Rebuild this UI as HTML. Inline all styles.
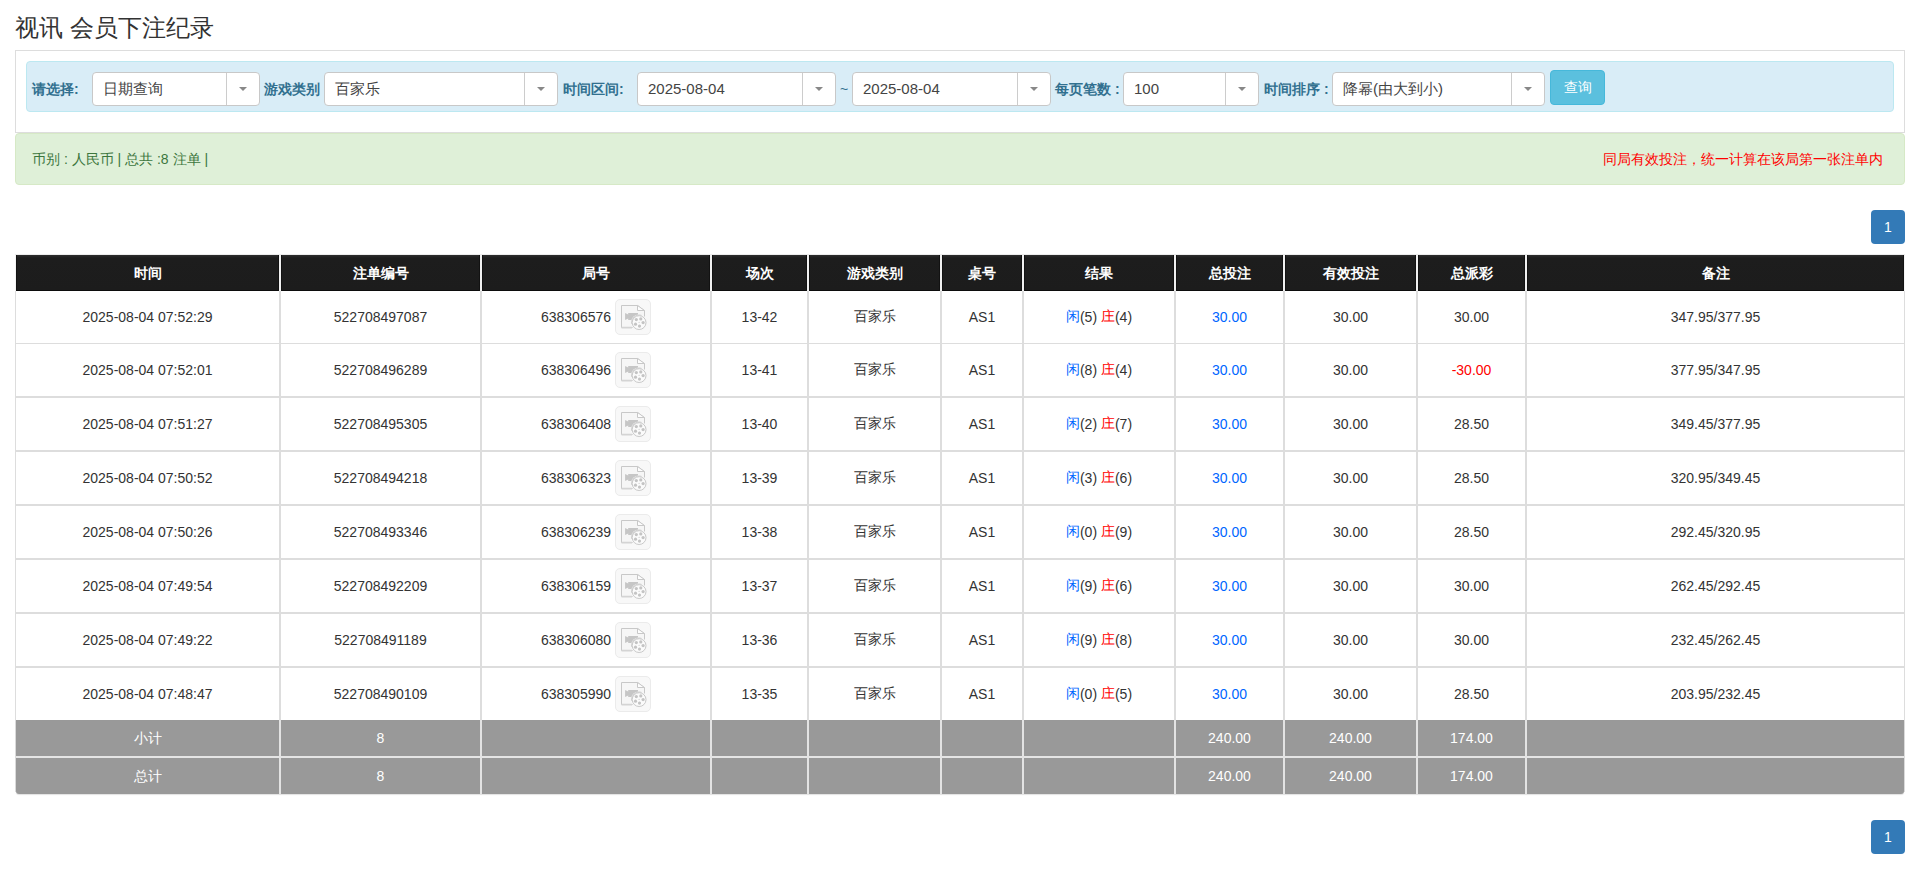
<!DOCTYPE html>
<html><head><meta charset="utf-8">
<style>
*{box-sizing:border-box;margin:0;padding:0}
html,body{width:1910px;height:869px;overflow:hidden;background:#fff}
body{font-family:"Liberation Sans",sans-serif;font-size:14px;color:#333;position:relative}
.abs{position:absolute}
.title{position:absolute;left:15px;top:13px;font-size:24px;line-height:30px;color:#333;white-space:nowrap}
.panel{position:absolute;left:15px;top:50px;width:1890px;height:83px;border:1px solid #ddd;background:#fff}
.info{position:absolute;left:26px;top:61px;width:1868px;height:51px;border:1px solid #bce8f1;background:#d9edf7;border-radius:4px}
.lbl{position:absolute;top:79px;line-height:20px;font-size:14px;font-weight:bold;color:#31708f;white-space:nowrap}
.sel{position:absolute;top:72px;height:34px;background:#fff;border:1px solid #c8c8c8;border-radius:4px}
.sel .tx{position:absolute;left:10px;top:0;line-height:32px;font-size:15px;color:#444;white-space:nowrap}
.sel .sep{position:absolute;right:32px;top:0;width:1px;height:32px;background:#ccc}
.sel .ar{position:absolute;right:12px;top:14px;width:0;height:0;border-left:4px solid transparent;border-right:4px solid transparent;border-top:4px solid #888}
.btn{position:absolute;left:1550px;top:70px;width:55px;height:35px;background:#5bc0de;border:1px solid #46b8da;border-radius:4px;color:#fff;font-size:14px;line-height:33px;text-align:center}
.ok{position:absolute;left:15px;top:133px;width:1890px;height:52px;background:#dff0d8;border:1px solid #d6e9c6;border-radius:4px}
.okl{position:absolute;left:16px;top:0;line-height:50px;color:#3c763d;font-size:14px;white-space:nowrap}
.okr{position:absolute;right:21px;top:0;line-height:50px;color:#ff0000;font-size:14px;white-space:nowrap}
.pg{position:absolute;left:1871px;width:34px;height:34px;background:#337ab7;border-radius:4px;color:#fff;text-align:center;line-height:34px;font-size:14px}
.thbg{position:absolute;left:15px;top:255px;width:1889px;height:36px;background:#1c1c1c;border-bottom:1px solid #0a0a0a;border-top:1px solid #2a2a2a}
.th{position:absolute;display:flex;align-items:center;justify-content:center;color:#fff;font-weight:bold;font-size:14px;white-space:nowrap;background:linear-gradient(#2d2d2d,#1d1d1d 3px,#1c1c1c);border-left:1px solid #121212;border-right:1px solid #121212;border-bottom:1px solid #0c0c0c}
.td{position:absolute;display:flex;align-items:center;justify-content:center;color:#333;font-size:14px;white-space:nowrap}
.tf{position:absolute;display:flex;align-items:center;justify-content:center;color:#fff;font-size:14px;white-space:nowrap}
.hl{position:absolute;left:15px;width:1890px;background:#dddddd}
.vl{position:absolute;width:2px;background:#dddddd}
.vlh{position:absolute;width:2px;background:#f0f0f0}
.vlf{position:absolute;width:2px;background:#e3e3e3}
.edge{position:absolute;width:1px;background:#dddddd}
.footbg{position:absolute;left:16px;top:720px;width:1888px;height:74px;background:#999;border-radius:0 0 3px 3px;box-shadow:0 1px 1px rgba(0,0,0,.12)}
.fline{position:absolute;left:16px;top:756px;width:1888px;height:2px;background:#e5e5e5}
.c{display:flex;align-items:center;white-space:pre}
.bl{color:#0066ff}
.rd{color:#ff0000}
.ico{display:inline-block;width:36px;height:36px;margin-left:4px;background:#f8f8f8;border:1px solid #ebebeb;border-radius:5px;position:relative;overflow:hidden}
.ico svg{position:absolute;left:-1px;top:-1px}
</style></head><body>
<div class="title">视讯 会员下注纪录</div>
<div class="panel"></div>
<div class="info"></div>
<div class="lbl" style="left:32px">请选择:</div>
<div class="sel" style="left:92px;width:168px"><span class="tx">日期查询</span><span class="sep"></span><span class="ar"></span></div>
<div class="lbl" style="left:264px">游戏类别</div>
<div class="sel" style="left:324px;width:234px"><span class="tx">百家乐</span><span class="sep"></span><span class="ar"></span></div>
<div class="lbl" style="left:563px">时间区间:</div>
<div class="sel" style="left:637px;width:199px"><span class="tx">2025-08-04</span><span class="sep"></span><span class="ar"></span></div>
<div class="lbl" style="left:840px;font-weight:normal">~</div>
<div class="sel" style="left:852px;width:199px"><span class="tx">2025-08-04</span><span class="sep"></span><span class="ar"></span></div>
<div class="lbl" style="left:1055px">每页笔数 :</div>
<div class="sel" style="left:1123px;width:136px"><span class="tx">100</span><span class="sep"></span><span class="ar"></span></div>
<div class="lbl" style="left:1264px">时间排序 :</div>
<div class="sel" style="left:1332px;width:213px"><span class="tx">降幂(由大到小)</span><span class="sep"></span><span class="ar"></span></div>
<div class="btn">查询</div>
<div class="ok"><span class="okl">币别 : 人民币 | 总共 :8 注单 |</span><span class="okr">同局有效投注，统一计算在该局第一张注单内</span></div>
<div class="pg" style="top:210px">1</div>
<div class="abs" style="left:15px;top:254px;width:1890px;height:1px;background:#ececec"></div><div class="abs" style="left:15px;top:255px;width:1px;height:36px;background:#f4f4f4"></div><div class="abs" style="left:1904px;top:255px;width:1px;height:36px;background:#f4f4f4"></div>
<div class="th" style="left:16px;width:263px;top:255px;height:36px"><span class="c" style="position:relative;top:1px">时间</span></div>
<div class="th" style="left:281px;width:199px;top:255px;height:36px"><span class="c" style="position:relative;top:1px">注单编号</span></div>
<div class="th" style="left:482px;width:228px;top:255px;height:36px"><span class="c" style="position:relative;top:1px">局号</span></div>
<div class="th" style="left:712px;width:95px;top:255px;height:36px"><span class="c" style="position:relative;top:1px">场次</span></div>
<div class="th" style="left:809px;width:131px;top:255px;height:36px"><span class="c" style="position:relative;top:1px">游戏类别</span></div>
<div class="th" style="left:942px;width:80px;top:255px;height:36px"><span class="c" style="position:relative;top:1px">桌号</span></div>
<div class="th" style="left:1024px;width:150px;top:255px;height:36px"><span class="c" style="position:relative;top:1px">结果</span></div>
<div class="th" style="left:1176px;width:107px;top:255px;height:36px"><span class="c" style="position:relative;top:1px">总投注</span></div>
<div class="th" style="left:1285px;width:131px;top:255px;height:36px"><span class="c" style="position:relative;top:1px">有效投注</span></div>
<div class="th" style="left:1418px;width:107px;top:255px;height:36px"><span class="c" style="position:relative;top:1px">总派彩</span></div>
<div class="th" style="left:1527px;width:377px;top:255px;height:36px"><span class="c" style="position:relative;top:1px">备注</span></div>
<div class="vlh" style="left:279px;top:255px;height:36px"></div>
<div class="vlh" style="left:480px;top:255px;height:36px"></div>
<div class="vlh" style="left:710px;top:255px;height:36px"></div>
<div class="vlh" style="left:807px;top:255px;height:36px"></div>
<div class="vlh" style="left:940px;top:255px;height:36px"></div>
<div class="vlh" style="left:1022px;top:255px;height:36px"></div>
<div class="vlh" style="left:1174px;top:255px;height:36px"></div>
<div class="vlh" style="left:1283px;top:255px;height:36px"></div>
<div class="vlh" style="left:1416px;top:255px;height:36px"></div>
<div class="vlh" style="left:1525px;top:255px;height:36px"></div>
<div class="td" style="left:16px;width:263px;top:291px;height:52px"><span class="c">2025-08-04 07:52:29</span></div>
<div class="td" style="left:281px;width:199px;top:291px;height:52px"><span class="c">522708497087</span></div>
<div class="td" style="left:482px;width:228px;top:291px;height:52px"><span class="c"><span class="gid">638306576</span><span class="ico"><svg width="36" height="36" viewBox="0 0 36 36"><path d="M6.5 6.5H22.6L29.5 11.8V28.5H6.5Z" fill="#f6f6f6" stroke="#c8c8c8" stroke-width="1"/><path d="M6.5 28.6H17" stroke="#d4d4d4" stroke-width="1.6"/><path d="M22.5 6.5V11.5H29.5Z" fill="#fdfdfd" stroke="#c8c8c8" stroke-width="1" stroke-linejoin="miter"/><path d="M10.1 14L13.2 15.4V14H23V21H13.2V19.6L10.1 21Z" fill="#c6c6c6"/><circle cx="24.1" cy="23.6" r="8.2" fill="#f7f7f7"/><path d="M16.6 24.8A7.6 7.6 0 0 1 26.6 16.4" fill="none" stroke="#d2d2d2" stroke-width="1"/><circle cx="24.1" cy="23.6" r="6.9" fill="#fbfbfb" stroke="#c8c8c8" stroke-width="1"/><circle cx="21.3" cy="20.6" r="1.6" fill="#c4c4c4"/><circle cx="25.8" cy="19.9" r="1.6" fill="#c4c4c4"/><circle cx="28.1" cy="23.6" r="1.6" fill="#c4c4c4"/><circle cx="24.5" cy="27.1" r="1.6" fill="#c4c4c4"/><circle cx="20.5" cy="25.2" r="1.6" fill="#c4c4c4"/><circle cx="24.1" cy="23.4" r="0.6" fill="#d0d0d0"/></svg></span></span></div>
<div class="td" style="left:712px;width:95px;top:291px;height:52px"><span class="c">13-42</span></div>
<div class="td" style="left:809px;width:131px;top:291px;height:52px"><span class="c">百家乐</span></div>
<div class="td" style="left:942px;width:80px;top:291px;height:52px"><span class="c">AS1</span></div>
<div class="td" style="left:1024px;width:150px;top:291px;height:52px"><span class="c"><span class="bl">闲</span>(5) <span class="rd">庄</span>(4)</span></div>
<div class="td" style="left:1176px;width:107px;top:291px;height:52px"><span class="c"><span class="bl">30.00</span></span></div>
<div class="td" style="left:1285px;width:131px;top:291px;height:52px"><span class="c">30.00</span></div>
<div class="td" style="left:1418px;width:107px;top:291px;height:52px"><span class="c"><span>30.00</span></span></div>
<div class="td" style="left:1527px;width:377px;top:291px;height:52px"><span class="c">347.95/377.95</span></div><div class="hl" style="top:343px;height:1px"></div><div class="td" style="left:16px;width:263px;top:344px;height:52px"><span class="c">2025-08-04 07:52:01</span></div>
<div class="td" style="left:281px;width:199px;top:344px;height:52px"><span class="c">522708496289</span></div>
<div class="td" style="left:482px;width:228px;top:344px;height:52px"><span class="c"><span class="gid">638306496</span><span class="ico"><svg width="36" height="36" viewBox="0 0 36 36"><path d="M6.5 6.5H22.6L29.5 11.8V28.5H6.5Z" fill="#f6f6f6" stroke="#c8c8c8" stroke-width="1"/><path d="M6.5 28.6H17" stroke="#d4d4d4" stroke-width="1.6"/><path d="M22.5 6.5V11.5H29.5Z" fill="#fdfdfd" stroke="#c8c8c8" stroke-width="1" stroke-linejoin="miter"/><path d="M10.1 14L13.2 15.4V14H23V21H13.2V19.6L10.1 21Z" fill="#c6c6c6"/><circle cx="24.1" cy="23.6" r="8.2" fill="#f7f7f7"/><path d="M16.6 24.8A7.6 7.6 0 0 1 26.6 16.4" fill="none" stroke="#d2d2d2" stroke-width="1"/><circle cx="24.1" cy="23.6" r="6.9" fill="#fbfbfb" stroke="#c8c8c8" stroke-width="1"/><circle cx="21.3" cy="20.6" r="1.6" fill="#c4c4c4"/><circle cx="25.8" cy="19.9" r="1.6" fill="#c4c4c4"/><circle cx="28.1" cy="23.6" r="1.6" fill="#c4c4c4"/><circle cx="24.5" cy="27.1" r="1.6" fill="#c4c4c4"/><circle cx="20.5" cy="25.2" r="1.6" fill="#c4c4c4"/><circle cx="24.1" cy="23.4" r="0.6" fill="#d0d0d0"/></svg></span></span></div>
<div class="td" style="left:712px;width:95px;top:344px;height:52px"><span class="c">13-41</span></div>
<div class="td" style="left:809px;width:131px;top:344px;height:52px"><span class="c">百家乐</span></div>
<div class="td" style="left:942px;width:80px;top:344px;height:52px"><span class="c">AS1</span></div>
<div class="td" style="left:1024px;width:150px;top:344px;height:52px"><span class="c"><span class="bl">闲</span>(8) <span class="rd">庄</span>(4)</span></div>
<div class="td" style="left:1176px;width:107px;top:344px;height:52px"><span class="c"><span class="bl">30.00</span></span></div>
<div class="td" style="left:1285px;width:131px;top:344px;height:52px"><span class="c">30.00</span></div>
<div class="td" style="left:1418px;width:107px;top:344px;height:52px"><span class="c"><span style="color:#ff0000">-30.00</span></span></div>
<div class="td" style="left:1527px;width:377px;top:344px;height:52px"><span class="c">377.95/347.95</span></div><div class="hl" style="top:396px;height:2px"></div><div class="td" style="left:16px;width:263px;top:398px;height:52px"><span class="c">2025-08-04 07:51:27</span></div>
<div class="td" style="left:281px;width:199px;top:398px;height:52px"><span class="c">522708495305</span></div>
<div class="td" style="left:482px;width:228px;top:398px;height:52px"><span class="c"><span class="gid">638306408</span><span class="ico"><svg width="36" height="36" viewBox="0 0 36 36"><path d="M6.5 6.5H22.6L29.5 11.8V28.5H6.5Z" fill="#f6f6f6" stroke="#c8c8c8" stroke-width="1"/><path d="M6.5 28.6H17" stroke="#d4d4d4" stroke-width="1.6"/><path d="M22.5 6.5V11.5H29.5Z" fill="#fdfdfd" stroke="#c8c8c8" stroke-width="1" stroke-linejoin="miter"/><path d="M10.1 14L13.2 15.4V14H23V21H13.2V19.6L10.1 21Z" fill="#c6c6c6"/><circle cx="24.1" cy="23.6" r="8.2" fill="#f7f7f7"/><path d="M16.6 24.8A7.6 7.6 0 0 1 26.6 16.4" fill="none" stroke="#d2d2d2" stroke-width="1"/><circle cx="24.1" cy="23.6" r="6.9" fill="#fbfbfb" stroke="#c8c8c8" stroke-width="1"/><circle cx="21.3" cy="20.6" r="1.6" fill="#c4c4c4"/><circle cx="25.8" cy="19.9" r="1.6" fill="#c4c4c4"/><circle cx="28.1" cy="23.6" r="1.6" fill="#c4c4c4"/><circle cx="24.5" cy="27.1" r="1.6" fill="#c4c4c4"/><circle cx="20.5" cy="25.2" r="1.6" fill="#c4c4c4"/><circle cx="24.1" cy="23.4" r="0.6" fill="#d0d0d0"/></svg></span></span></div>
<div class="td" style="left:712px;width:95px;top:398px;height:52px"><span class="c">13-40</span></div>
<div class="td" style="left:809px;width:131px;top:398px;height:52px"><span class="c">百家乐</span></div>
<div class="td" style="left:942px;width:80px;top:398px;height:52px"><span class="c">AS1</span></div>
<div class="td" style="left:1024px;width:150px;top:398px;height:52px"><span class="c"><span class="bl">闲</span>(2) <span class="rd">庄</span>(7)</span></div>
<div class="td" style="left:1176px;width:107px;top:398px;height:52px"><span class="c"><span class="bl">30.00</span></span></div>
<div class="td" style="left:1285px;width:131px;top:398px;height:52px"><span class="c">30.00</span></div>
<div class="td" style="left:1418px;width:107px;top:398px;height:52px"><span class="c"><span>28.50</span></span></div>
<div class="td" style="left:1527px;width:377px;top:398px;height:52px"><span class="c">349.45/377.95</span></div><div class="hl" style="top:450px;height:2px"></div><div class="td" style="left:16px;width:263px;top:452px;height:52px"><span class="c">2025-08-04 07:50:52</span></div>
<div class="td" style="left:281px;width:199px;top:452px;height:52px"><span class="c">522708494218</span></div>
<div class="td" style="left:482px;width:228px;top:452px;height:52px"><span class="c"><span class="gid">638306323</span><span class="ico"><svg width="36" height="36" viewBox="0 0 36 36"><path d="M6.5 6.5H22.6L29.5 11.8V28.5H6.5Z" fill="#f6f6f6" stroke="#c8c8c8" stroke-width="1"/><path d="M6.5 28.6H17" stroke="#d4d4d4" stroke-width="1.6"/><path d="M22.5 6.5V11.5H29.5Z" fill="#fdfdfd" stroke="#c8c8c8" stroke-width="1" stroke-linejoin="miter"/><path d="M10.1 14L13.2 15.4V14H23V21H13.2V19.6L10.1 21Z" fill="#c6c6c6"/><circle cx="24.1" cy="23.6" r="8.2" fill="#f7f7f7"/><path d="M16.6 24.8A7.6 7.6 0 0 1 26.6 16.4" fill="none" stroke="#d2d2d2" stroke-width="1"/><circle cx="24.1" cy="23.6" r="6.9" fill="#fbfbfb" stroke="#c8c8c8" stroke-width="1"/><circle cx="21.3" cy="20.6" r="1.6" fill="#c4c4c4"/><circle cx="25.8" cy="19.9" r="1.6" fill="#c4c4c4"/><circle cx="28.1" cy="23.6" r="1.6" fill="#c4c4c4"/><circle cx="24.5" cy="27.1" r="1.6" fill="#c4c4c4"/><circle cx="20.5" cy="25.2" r="1.6" fill="#c4c4c4"/><circle cx="24.1" cy="23.4" r="0.6" fill="#d0d0d0"/></svg></span></span></div>
<div class="td" style="left:712px;width:95px;top:452px;height:52px"><span class="c">13-39</span></div>
<div class="td" style="left:809px;width:131px;top:452px;height:52px"><span class="c">百家乐</span></div>
<div class="td" style="left:942px;width:80px;top:452px;height:52px"><span class="c">AS1</span></div>
<div class="td" style="left:1024px;width:150px;top:452px;height:52px"><span class="c"><span class="bl">闲</span>(3) <span class="rd">庄</span>(6)</span></div>
<div class="td" style="left:1176px;width:107px;top:452px;height:52px"><span class="c"><span class="bl">30.00</span></span></div>
<div class="td" style="left:1285px;width:131px;top:452px;height:52px"><span class="c">30.00</span></div>
<div class="td" style="left:1418px;width:107px;top:452px;height:52px"><span class="c"><span>28.50</span></span></div>
<div class="td" style="left:1527px;width:377px;top:452px;height:52px"><span class="c">320.95/349.45</span></div><div class="hl" style="top:504px;height:2px"></div><div class="td" style="left:16px;width:263px;top:506px;height:52px"><span class="c">2025-08-04 07:50:26</span></div>
<div class="td" style="left:281px;width:199px;top:506px;height:52px"><span class="c">522708493346</span></div>
<div class="td" style="left:482px;width:228px;top:506px;height:52px"><span class="c"><span class="gid">638306239</span><span class="ico"><svg width="36" height="36" viewBox="0 0 36 36"><path d="M6.5 6.5H22.6L29.5 11.8V28.5H6.5Z" fill="#f6f6f6" stroke="#c8c8c8" stroke-width="1"/><path d="M6.5 28.6H17" stroke="#d4d4d4" stroke-width="1.6"/><path d="M22.5 6.5V11.5H29.5Z" fill="#fdfdfd" stroke="#c8c8c8" stroke-width="1" stroke-linejoin="miter"/><path d="M10.1 14L13.2 15.4V14H23V21H13.2V19.6L10.1 21Z" fill="#c6c6c6"/><circle cx="24.1" cy="23.6" r="8.2" fill="#f7f7f7"/><path d="M16.6 24.8A7.6 7.6 0 0 1 26.6 16.4" fill="none" stroke="#d2d2d2" stroke-width="1"/><circle cx="24.1" cy="23.6" r="6.9" fill="#fbfbfb" stroke="#c8c8c8" stroke-width="1"/><circle cx="21.3" cy="20.6" r="1.6" fill="#c4c4c4"/><circle cx="25.8" cy="19.9" r="1.6" fill="#c4c4c4"/><circle cx="28.1" cy="23.6" r="1.6" fill="#c4c4c4"/><circle cx="24.5" cy="27.1" r="1.6" fill="#c4c4c4"/><circle cx="20.5" cy="25.2" r="1.6" fill="#c4c4c4"/><circle cx="24.1" cy="23.4" r="0.6" fill="#d0d0d0"/></svg></span></span></div>
<div class="td" style="left:712px;width:95px;top:506px;height:52px"><span class="c">13-38</span></div>
<div class="td" style="left:809px;width:131px;top:506px;height:52px"><span class="c">百家乐</span></div>
<div class="td" style="left:942px;width:80px;top:506px;height:52px"><span class="c">AS1</span></div>
<div class="td" style="left:1024px;width:150px;top:506px;height:52px"><span class="c"><span class="bl">闲</span>(0) <span class="rd">庄</span>(9)</span></div>
<div class="td" style="left:1176px;width:107px;top:506px;height:52px"><span class="c"><span class="bl">30.00</span></span></div>
<div class="td" style="left:1285px;width:131px;top:506px;height:52px"><span class="c">30.00</span></div>
<div class="td" style="left:1418px;width:107px;top:506px;height:52px"><span class="c"><span>28.50</span></span></div>
<div class="td" style="left:1527px;width:377px;top:506px;height:52px"><span class="c">292.45/320.95</span></div><div class="hl" style="top:558px;height:2px"></div><div class="td" style="left:16px;width:263px;top:560px;height:52px"><span class="c">2025-08-04 07:49:54</span></div>
<div class="td" style="left:281px;width:199px;top:560px;height:52px"><span class="c">522708492209</span></div>
<div class="td" style="left:482px;width:228px;top:560px;height:52px"><span class="c"><span class="gid">638306159</span><span class="ico"><svg width="36" height="36" viewBox="0 0 36 36"><path d="M6.5 6.5H22.6L29.5 11.8V28.5H6.5Z" fill="#f6f6f6" stroke="#c8c8c8" stroke-width="1"/><path d="M6.5 28.6H17" stroke="#d4d4d4" stroke-width="1.6"/><path d="M22.5 6.5V11.5H29.5Z" fill="#fdfdfd" stroke="#c8c8c8" stroke-width="1" stroke-linejoin="miter"/><path d="M10.1 14L13.2 15.4V14H23V21H13.2V19.6L10.1 21Z" fill="#c6c6c6"/><circle cx="24.1" cy="23.6" r="8.2" fill="#f7f7f7"/><path d="M16.6 24.8A7.6 7.6 0 0 1 26.6 16.4" fill="none" stroke="#d2d2d2" stroke-width="1"/><circle cx="24.1" cy="23.6" r="6.9" fill="#fbfbfb" stroke="#c8c8c8" stroke-width="1"/><circle cx="21.3" cy="20.6" r="1.6" fill="#c4c4c4"/><circle cx="25.8" cy="19.9" r="1.6" fill="#c4c4c4"/><circle cx="28.1" cy="23.6" r="1.6" fill="#c4c4c4"/><circle cx="24.5" cy="27.1" r="1.6" fill="#c4c4c4"/><circle cx="20.5" cy="25.2" r="1.6" fill="#c4c4c4"/><circle cx="24.1" cy="23.4" r="0.6" fill="#d0d0d0"/></svg></span></span></div>
<div class="td" style="left:712px;width:95px;top:560px;height:52px"><span class="c">13-37</span></div>
<div class="td" style="left:809px;width:131px;top:560px;height:52px"><span class="c">百家乐</span></div>
<div class="td" style="left:942px;width:80px;top:560px;height:52px"><span class="c">AS1</span></div>
<div class="td" style="left:1024px;width:150px;top:560px;height:52px"><span class="c"><span class="bl">闲</span>(9) <span class="rd">庄</span>(6)</span></div>
<div class="td" style="left:1176px;width:107px;top:560px;height:52px"><span class="c"><span class="bl">30.00</span></span></div>
<div class="td" style="left:1285px;width:131px;top:560px;height:52px"><span class="c">30.00</span></div>
<div class="td" style="left:1418px;width:107px;top:560px;height:52px"><span class="c"><span>30.00</span></span></div>
<div class="td" style="left:1527px;width:377px;top:560px;height:52px"><span class="c">262.45/292.45</span></div><div class="hl" style="top:612px;height:2px"></div><div class="td" style="left:16px;width:263px;top:614px;height:52px"><span class="c">2025-08-04 07:49:22</span></div>
<div class="td" style="left:281px;width:199px;top:614px;height:52px"><span class="c">522708491189</span></div>
<div class="td" style="left:482px;width:228px;top:614px;height:52px"><span class="c"><span class="gid">638306080</span><span class="ico"><svg width="36" height="36" viewBox="0 0 36 36"><path d="M6.5 6.5H22.6L29.5 11.8V28.5H6.5Z" fill="#f6f6f6" stroke="#c8c8c8" stroke-width="1"/><path d="M6.5 28.6H17" stroke="#d4d4d4" stroke-width="1.6"/><path d="M22.5 6.5V11.5H29.5Z" fill="#fdfdfd" stroke="#c8c8c8" stroke-width="1" stroke-linejoin="miter"/><path d="M10.1 14L13.2 15.4V14H23V21H13.2V19.6L10.1 21Z" fill="#c6c6c6"/><circle cx="24.1" cy="23.6" r="8.2" fill="#f7f7f7"/><path d="M16.6 24.8A7.6 7.6 0 0 1 26.6 16.4" fill="none" stroke="#d2d2d2" stroke-width="1"/><circle cx="24.1" cy="23.6" r="6.9" fill="#fbfbfb" stroke="#c8c8c8" stroke-width="1"/><circle cx="21.3" cy="20.6" r="1.6" fill="#c4c4c4"/><circle cx="25.8" cy="19.9" r="1.6" fill="#c4c4c4"/><circle cx="28.1" cy="23.6" r="1.6" fill="#c4c4c4"/><circle cx="24.5" cy="27.1" r="1.6" fill="#c4c4c4"/><circle cx="20.5" cy="25.2" r="1.6" fill="#c4c4c4"/><circle cx="24.1" cy="23.4" r="0.6" fill="#d0d0d0"/></svg></span></span></div>
<div class="td" style="left:712px;width:95px;top:614px;height:52px"><span class="c">13-36</span></div>
<div class="td" style="left:809px;width:131px;top:614px;height:52px"><span class="c">百家乐</span></div>
<div class="td" style="left:942px;width:80px;top:614px;height:52px"><span class="c">AS1</span></div>
<div class="td" style="left:1024px;width:150px;top:614px;height:52px"><span class="c"><span class="bl">闲</span>(9) <span class="rd">庄</span>(8)</span></div>
<div class="td" style="left:1176px;width:107px;top:614px;height:52px"><span class="c"><span class="bl">30.00</span></span></div>
<div class="td" style="left:1285px;width:131px;top:614px;height:52px"><span class="c">30.00</span></div>
<div class="td" style="left:1418px;width:107px;top:614px;height:52px"><span class="c"><span>30.00</span></span></div>
<div class="td" style="left:1527px;width:377px;top:614px;height:52px"><span class="c">232.45/262.45</span></div><div class="hl" style="top:666px;height:2px"></div><div class="td" style="left:16px;width:263px;top:668px;height:52px"><span class="c">2025-08-04 07:48:47</span></div>
<div class="td" style="left:281px;width:199px;top:668px;height:52px"><span class="c">522708490109</span></div>
<div class="td" style="left:482px;width:228px;top:668px;height:52px"><span class="c"><span class="gid">638305990</span><span class="ico"><svg width="36" height="36" viewBox="0 0 36 36"><path d="M6.5 6.5H22.6L29.5 11.8V28.5H6.5Z" fill="#f6f6f6" stroke="#c8c8c8" stroke-width="1"/><path d="M6.5 28.6H17" stroke="#d4d4d4" stroke-width="1.6"/><path d="M22.5 6.5V11.5H29.5Z" fill="#fdfdfd" stroke="#c8c8c8" stroke-width="1" stroke-linejoin="miter"/><path d="M10.1 14L13.2 15.4V14H23V21H13.2V19.6L10.1 21Z" fill="#c6c6c6"/><circle cx="24.1" cy="23.6" r="8.2" fill="#f7f7f7"/><path d="M16.6 24.8A7.6 7.6 0 0 1 26.6 16.4" fill="none" stroke="#d2d2d2" stroke-width="1"/><circle cx="24.1" cy="23.6" r="6.9" fill="#fbfbfb" stroke="#c8c8c8" stroke-width="1"/><circle cx="21.3" cy="20.6" r="1.6" fill="#c4c4c4"/><circle cx="25.8" cy="19.9" r="1.6" fill="#c4c4c4"/><circle cx="28.1" cy="23.6" r="1.6" fill="#c4c4c4"/><circle cx="24.5" cy="27.1" r="1.6" fill="#c4c4c4"/><circle cx="20.5" cy="25.2" r="1.6" fill="#c4c4c4"/><circle cx="24.1" cy="23.4" r="0.6" fill="#d0d0d0"/></svg></span></span></div>
<div class="td" style="left:712px;width:95px;top:668px;height:52px"><span class="c">13-35</span></div>
<div class="td" style="left:809px;width:131px;top:668px;height:52px"><span class="c">百家乐</span></div>
<div class="td" style="left:942px;width:80px;top:668px;height:52px"><span class="c">AS1</span></div>
<div class="td" style="left:1024px;width:150px;top:668px;height:52px"><span class="c"><span class="bl">闲</span>(0) <span class="rd">庄</span>(5)</span></div>
<div class="td" style="left:1176px;width:107px;top:668px;height:52px"><span class="c"><span class="bl">30.00</span></span></div>
<div class="td" style="left:1285px;width:131px;top:668px;height:52px"><span class="c">30.00</span></div>
<div class="td" style="left:1418px;width:107px;top:668px;height:52px"><span class="c"><span>28.50</span></span></div>
<div class="td" style="left:1527px;width:377px;top:668px;height:52px"><span class="c">203.95/232.45</span></div>
<div class="vl" style="left:279px;top:291px;height:429px"></div>
<div class="vl" style="left:480px;top:291px;height:429px"></div>
<div class="vl" style="left:710px;top:291px;height:429px"></div>
<div class="vl" style="left:807px;top:291px;height:429px"></div>
<div class="vl" style="left:940px;top:291px;height:429px"></div>
<div class="vl" style="left:1022px;top:291px;height:429px"></div>
<div class="vl" style="left:1174px;top:291px;height:429px"></div>
<div class="vl" style="left:1283px;top:291px;height:429px"></div>
<div class="vl" style="left:1416px;top:291px;height:429px"></div>
<div class="vl" style="left:1525px;top:291px;height:429px"></div>
<div class="edge" style="left:15px;top:291px;height:501px"></div>
<div class="edge" style="left:1904px;top:291px;height:501px"></div>
<div class="footbg"></div>
<div class="fline"></div>
<div class="tf" style="left:16px;width:263px;top:720px;height:36px"><span class="c"><span style="position:relative;top:1px">小计</span></span></div>
<div class="tf" style="left:281px;width:199px;top:720px;height:36px"><span class="c">8</span></div>
<div class="tf" style="left:482px;width:228px;top:720px;height:36px"><span class="c"></span></div>
<div class="tf" style="left:712px;width:95px;top:720px;height:36px"><span class="c"></span></div>
<div class="tf" style="left:809px;width:131px;top:720px;height:36px"><span class="c"></span></div>
<div class="tf" style="left:942px;width:80px;top:720px;height:36px"><span class="c"></span></div>
<div class="tf" style="left:1024px;width:150px;top:720px;height:36px"><span class="c"></span></div>
<div class="tf" style="left:1176px;width:107px;top:720px;height:36px"><span class="c">240.00</span></div>
<div class="tf" style="left:1285px;width:131px;top:720px;height:36px"><span class="c">240.00</span></div>
<div class="tf" style="left:1418px;width:107px;top:720px;height:36px"><span class="c">174.00</span></div>
<div class="tf" style="left:1527px;width:377px;top:720px;height:36px"><span class="c"></span></div>
<div class="tf" style="left:16px;width:263px;top:758px;height:36px"><span class="c"><span style="position:relative;top:1px">总计</span></span></div>
<div class="tf" style="left:281px;width:199px;top:758px;height:36px"><span class="c">8</span></div>
<div class="tf" style="left:482px;width:228px;top:758px;height:36px"><span class="c"></span></div>
<div class="tf" style="left:712px;width:95px;top:758px;height:36px"><span class="c"></span></div>
<div class="tf" style="left:809px;width:131px;top:758px;height:36px"><span class="c"></span></div>
<div class="tf" style="left:942px;width:80px;top:758px;height:36px"><span class="c"></span></div>
<div class="tf" style="left:1024px;width:150px;top:758px;height:36px"><span class="c"></span></div>
<div class="tf" style="left:1176px;width:107px;top:758px;height:36px"><span class="c">240.00</span></div>
<div class="tf" style="left:1285px;width:131px;top:758px;height:36px"><span class="c">240.00</span></div>
<div class="tf" style="left:1418px;width:107px;top:758px;height:36px"><span class="c">174.00</span></div>
<div class="tf" style="left:1527px;width:377px;top:758px;height:36px"><span class="c"></span></div>
<div class="vlf" style="left:279px;top:720px;height:74px"></div>
<div class="vlf" style="left:480px;top:720px;height:74px"></div>
<div class="vlf" style="left:710px;top:720px;height:74px"></div>
<div class="vlf" style="left:807px;top:720px;height:74px"></div>
<div class="vlf" style="left:940px;top:720px;height:74px"></div>
<div class="vlf" style="left:1022px;top:720px;height:74px"></div>
<div class="vlf" style="left:1174px;top:720px;height:74px"></div>
<div class="vlf" style="left:1283px;top:720px;height:74px"></div>
<div class="vlf" style="left:1416px;top:720px;height:74px"></div>
<div class="vlf" style="left:1525px;top:720px;height:74px"></div>
<div class="pg" style="top:820px">1</div>
</body></html>
